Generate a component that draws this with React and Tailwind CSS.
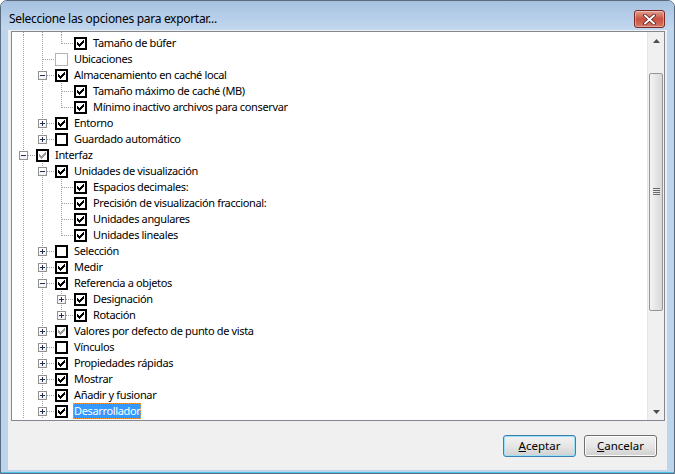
import React from 'react';

// Filas del árbol: nivel, expansor, estado, texto y líneas guía por columna
// cols: 1 = línea completa, 0.5 = sólo hasta el centro, 0 = nada
const rows = [
  { L: 2, exp: null, chk: 'on', t: 'Tamaño de búfer', cols: [1, 1, 0.5] },
  { L: 1, exp: null, chk: 'none', t: 'Ubicaciones', cols: [1, 1] },
  { L: 1, exp: 'minus', chk: 'on', t: 'Almacenamiento en caché local', cols: [1, 1] },
  { L: 2, exp: null, chk: 'on', t: 'Tamaño máximo de caché (MB)', cols: [1, 1, 1] },
  { L: 2, exp: null, chk: 'on', t: 'Mínimo inactivo archivos para conservar', cols: [1, 1, 0.5] },
  { L: 1, exp: 'plus', chk: 'on', t: 'Entorno', cols: [1, 1] },
  { L: 1, exp: 'plus', chk: 'off', t: 'Guardado automático', cols: [1, 0.5] },
  { L: 0, exp: 'minus', chk: 'gray', t: 'Interfaz', cols: [1] },
  { L: 1, exp: 'minus', chk: 'on', t: 'Unidades de visualización', cols: [1, 1] },
  { L: 2, exp: null, chk: 'on', t: 'Espacios decimales:', cols: [1, 1, 1] },
  { L: 2, exp: null, chk: 'on', t: 'Precisión de visualización fraccional:', cols: [1, 1, 1] },
  { L: 2, exp: null, chk: 'on', t: 'Unidades angulares', cols: [1, 1, 1] },
  { L: 2, exp: null, chk: 'on', t: 'Unidades lineales', cols: [1, 1, 0.5] },
  { L: 1, exp: 'plus', chk: 'off', t: 'Selección', cols: [1, 1] },
  { L: 1, exp: 'plus', chk: 'on', t: 'Medir', cols: [1, 1] },
  { L: 1, exp: 'minus', chk: 'on', t: 'Referencia a objetos', cols: [1, 1] },
  { L: 2, exp: 'plus', chk: 'on', t: 'Designación', cols: [1, 1, 1] },
  { L: 2, exp: 'plus', chk: 'on', t: 'Rotación', cols: [1, 1, 0.5] },
  { L: 1, exp: 'plus', chk: 'gray', t: 'Valores por defecto de punto de vista', cols: [1, 1] },
  { L: 1, exp: 'plus', chk: 'off', t: 'Vínculos', cols: [1, 1] },
  { L: 1, exp: 'plus', chk: 'on', t: 'Propiedades rápidas', cols: [1, 1] },
  { L: 1, exp: 'plus', chk: 'on', t: 'Mostrar', cols: [1, 1] },
  { L: 1, exp: 'plus', chk: 'on', t: 'Añadir y fusionar', cols: [1, 1] },
  { L: 1, exp: 'plus', chk: 'on', t: 'Desarrollador', cols: [1, 1], sel: true },
];

const DOT = '#a0a0a0';

// marca de verificación clásica 7x7 en píxeles
const checkCols = [2, 3, 4, 3, 2, 1, 0];

function Check({ color }) {
  return (
    <svg width="9" height="9" viewBox="0 0 9 9" shapeRendering="crispEdges">
      {checkCols.map((y, i) => (
        <rect key={i} x={i + 1} y={y + 1} width="1" height="3" fill={color} />
      ))}
    </svg>
  );
}

function CheckBox({ state }) {
  if (state === 'none') {
    return <div className="w-[13px] h-[13px] shrink-0 border border-[#b4b4b4] bg-white" />;
  }
  return (
    <div className="w-[13px] h-[13px] shrink-0 border-2 border-black bg-white flex items-center justify-center">
      {state === 'on' && <Check color="#000" />}
      {state === 'gray' && <Check color="#9a9a9a" />}
    </div>
  );
}

function Guides({ row }) {
  const { L, exp, cols } = row;
  const w = 24 + 19 * L;
  const cx = 11 + 19 * L;
  return (
    <svg width={w} height="16" className="shrink-0" shapeRendering="crispEdges">
      {cols.map((c, i) =>
        c ? (
          <line key={i} x1={11 + 19 * i + 0.5} y1="0" x2={11 + 19 * i + 0.5} y2={c === 1 ? 16 : 9}
            stroke={DOT} strokeDasharray="1 1" />
        ) : null
      )}
      <line x1={exp ? cx + 5 : cx + 1} y1="8.5" x2={w - 1} y2="8.5" stroke={DOT} strokeDasharray="1 1" />
      {exp && (
        <g>
          <rect x={cx - 4 + 0.5} y="4.5" width="8" height="8" fill="#f4f4f4" stroke="#919191" />
          <rect x={cx - 3} y="5" width="7" height="3" fill="#ffffff" />
          <rect x={cx - 2} y="8" width="5" height="1" fill="#1f2f55" />
          {exp === 'plus' && <rect x={cx} y="6" width="1" height="5" fill="#1f2f55" />}
        </g>
      )}
    </svg>
  );
}

function TreeRow({ row }) {
  return (
    <div className="flex items-center h-4 whitespace-nowrap">
      <Guides row={row} />
      <CheckBox state={row.chk} />
      {row.sel ? (
        <span className="ml-[5px] px-px h-4 leading-4 bg-[#3399ff] text-white outline outline-1 outline-dotted outline-[#ff9933] -outline-offset-1">
          {row.t}
        </span>
      ) : (
        <span className="ml-[6px] leading-4">{row.t}</span>
      )}
    </div>
  );
}

function ScrollBar() {
  return (
    <div className="w-[17px] shrink-0 flex flex-col bg-[#f0f0f0] border-l border-[#e6e6e6]">
      <div className="h-[17px] flex items-center justify-center">
        <svg width="7" height="4" viewBox="0 0 7 4"><path d="M3.5 0L7 4H0z" fill="#4d4d4d" /></svg>
      </div>
      <div className="h-[24px]" />
      <div className="h-[238px] mx-px rounded-[2px] border border-[#979797] bg-gradient-to-r from-[#f4f4f4] to-[#d8d8d8] flex items-center justify-center">
        <svg width="7" height="8" viewBox="0 0 7 8" shapeRendering="crispEdges">
          {[0, 2, 4, 6].map((y) => (
            <rect key={y} x="0" y={y} width="7" height="1" fill="#6b6b6b" />
          ))}
        </svg>
      </div>
      <div className="flex-1" />
      <div className="h-[17px] flex items-center justify-center">
        <svg width="7" height="4" viewBox="0 0 7 4"><path d="M0 0H7L3.5 4z" fill="#4d4d4d" /></svg>
      </div>
    </div>
  );
}

export default function App() {
  return (
    <div
      className="w-[675px] h-[474px] flex flex-col bg-[#bcd4ec] border border-[#5a6b7d] rounded-t-[7px] overflow-hidden text-[12px] text-black"
      style={{ fontFamily: '"Noto Sans", "Open Sans", sans-serif' }}
    >
      {/* Barra de título */}
      <div className="h-[29px] shrink-0 flex items-center justify-between pl-[8px] pr-[9px] bg-gradient-to-b from-[#a6c1e0] to-[#c2d8ef]">
        <span className="pt-[7px] tracking-[-0.3px]">Seleccione las opciones para exportar...</span>
        <div className="mt-[7px] w-[31px] h-[18px] rounded-[3px] border border-[#7a2a22] bg-gradient-to-b from-[#e2a093] via-[#c9503f] to-[#d47866] flex items-center justify-center shadow-[inset_0_0_0_1px_rgba(255,255,255,0.35)]">
          <svg width="13" height="11" viewBox="0 0 13 11">
            <path d="M2 1.5L11 9.5M11 1.5L2 9.5" stroke="#5a1a14" strokeWidth="3.6" strokeLinecap="round" />
            <path d="M2 1.5L11 9.5M11 1.5L2 9.5" stroke="#ffffff" strokeWidth="2" strokeLinecap="round" />
          </svg>
        </div>
      </div>

      {/* Área de cliente */}
      <div className="mx-[7px] h-[440px] bg-[#f0f0f0] flex flex-col">
        <div className="mt-px ml-[3px] mr-[2px] h-[390px] border border-[#828790] bg-white flex text-[11px] tracking-[-0.35px]">
          <div className="flex-1 flex flex-col overflow-hidden">
            <svg width="80" height="3" className="shrink-0" shapeRendering="crispEdges">
              {[0, 1, 2].map((i) => (
                <line key={i} x1={11 + 19 * i + 0.5} y1="0" x2={11 + 19 * i + 0.5} y2="3" stroke={DOT} strokeDasharray="1 1" />
              ))}
            </svg>
            {rows.map((r, i) => (
              <TreeRow key={i} row={r} />
            ))}
          </div>
          <ScrollBar />
        </div>

        <div className="mt-[14px] mr-[10px] flex justify-end gap-[8px] text-[11.5px]">
          <button className="w-[73px] h-[22px] rounded-[3px] border border-[#3c7fb1] bg-gradient-to-b from-[#f2f2f2] via-[#e6e6e6] to-[#d0d0d0] shadow-[inset_0_0_0_1px_#9ce0f7]">
            <span className="underline">A</span>ceptar
          </button>
          <button className="w-[73px] h-[22px] rounded-[3px] border border-[#707070] bg-gradient-to-b from-[#f2f2f2] via-[#e6e6e6] to-[#d0d0d0] shadow-[inset_0_0_0_1px_#fbfbfb]">
            <span className="underline">C</span>ancelar
          </button>
        </div>
      </div>
      <div className="flex-1 border-b border-[#4bc3e8]" />
    </div>
  );
}
